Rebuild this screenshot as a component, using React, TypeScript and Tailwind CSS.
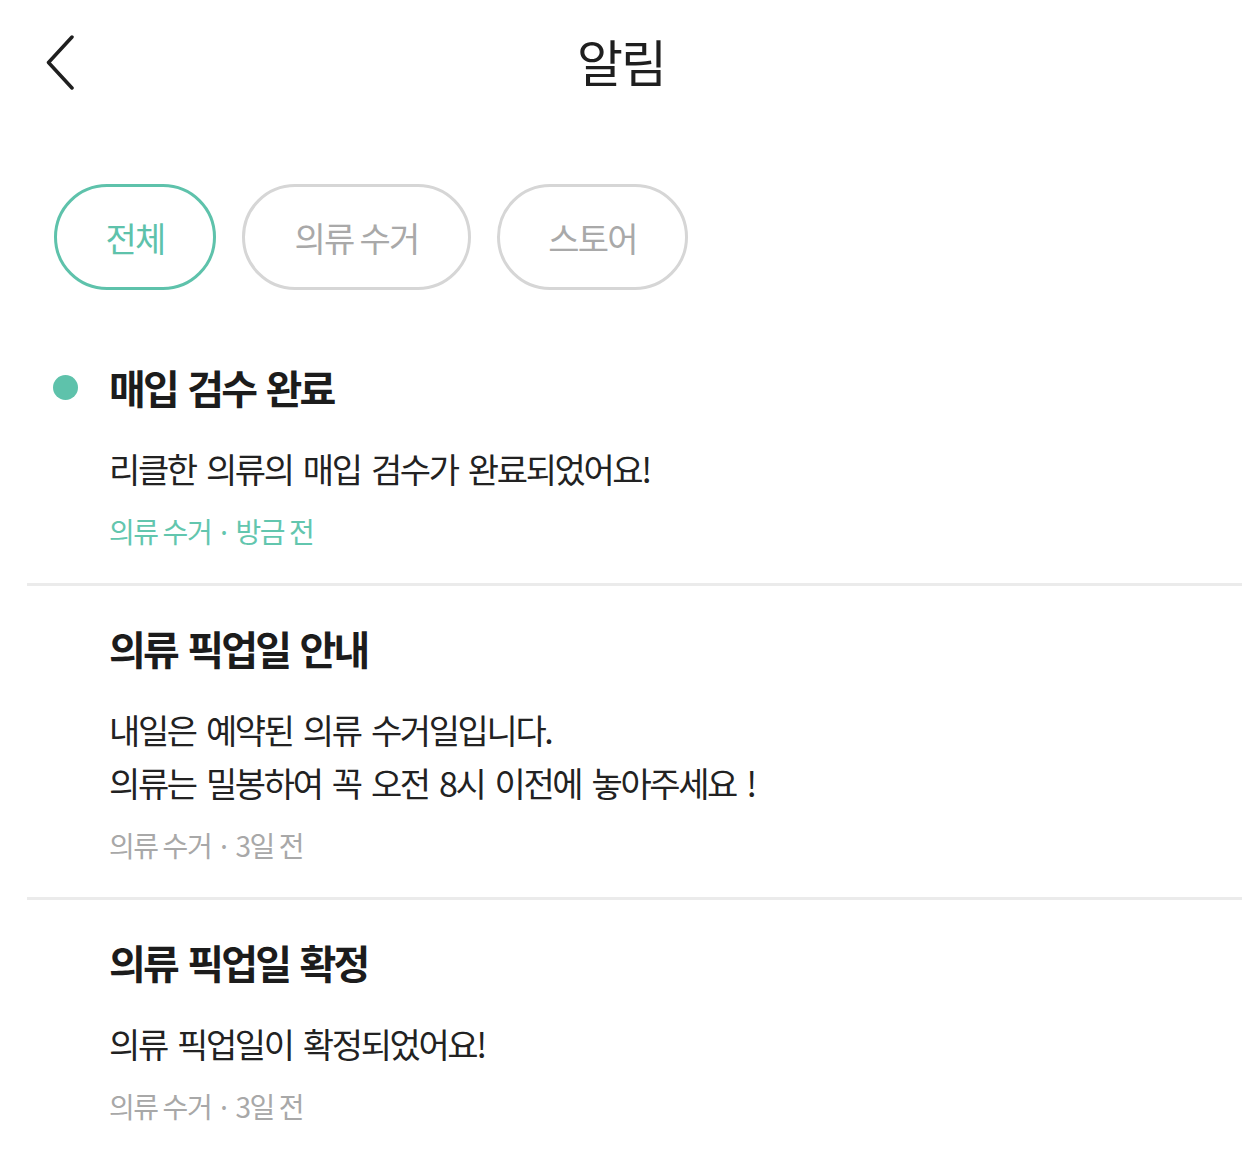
import { useState } from "react"

interface Notice {
  id: number
  title: string
  body: string[]
  category: string
  time: string
  unread: boolean
}

const tabs = [
  { key: "all", label: "전체", width: "w-[162px]" },
  { key: "pickup", label: "의류 수거", width: "w-[229px]" },
  { key: "store", label: "스토어", width: "w-[191px]" },
]

const notices: Notice[] = [
  {
    id: 1,
    title: "매입 검수 완료",
    body: ["리클한 의류의 매입 검수가 완료되었어요!"],
    category: "의류 수거",
    time: "방금 전",
    unread: true,
  },
  {
    id: 2,
    title: "의류 픽업일 안내",
    body: ["내일은 예약된 의류 수거일입니다.", "의류는 밀봉하여 꼭 오전 8시 이전에 놓아주세요 !"],
    category: "의류 수거",
    time: "3일 전",
    unread: false,
  },
  {
    id: 3,
    title: "의류 픽업일 확정",
    body: ["의류 픽업일이 확정되었어요!"],
    category: "의류 수거",
    time: "3일 전",
    unread: false,
  },
]

function BackIcon() {
  return (
    <svg width="28" height="56" viewBox="0 0 28 56" fill="none" className="mt-[6px] -ml-[1px]">
      <path
        d="M26 2 L2.5 27.5 L26 53"
        stroke="#1f1f1f"
        strokeWidth="3.5"
        strokeLinecap="round"
        strokeLinejoin="round"
      />
    </svg>
  )
}

export default function App() {
  const [active, setActive] = useState("all")

  return (
    <div className="min-h-screen w-[1242px] bg-white font-['Noto_Sans_CJK_KR','Noto_Sans_CJK_JP',sans-serif] text-[#1c1c1c]">
      {/* header */}
      <header className="grid h-[120px] grid-cols-[1fr_auto_1fr] items-center px-[47px]">
        <button className="flex items-center justify-start">
          <BackIcon />
        </button>
        <h1 className="text-[50px] leading-none font-normal tracking-[-0.04em] text-[#1f1f1f]">알림</h1>
        <div />
      </header>

      {/* filter tabs */}
      <div className="mt-[64px] flex gap-[26px] pl-[54px]">
        {tabs.map((tab) => (
          <button
            key={tab.key}
            onClick={() => setActive(tab.key)}
            className={`${tab.width} flex h-[106px] items-center justify-center rounded-full border-[3px] text-[34px] tracking-[-0.05em] ${
              active === tab.key ? "border-[#5ec2ab] text-[#5ec2ab]" : "border-[#d6d6d6] text-[#a9a9a9]"
            }`}
          >
            {tab.label}
          </button>
        ))}
      </div>

      {/* notification list */}
      <ul className="mt-[35px] ml-[27px]">
        {notices.map((n, i) => (
          <li
            key={n.id}
            className={`flex pt-[37px] pb-[32px] pl-[26px] ${i < notices.length - 1 ? "border-b-[3px] border-[#ebebeb]" : ""}`}
          >
            <div className="w-[25px] shrink-0">
              {n.unread && <span className="mt-[13px] block h-[25px] w-[25px] rounded-full bg-[#5ec2ab]" />}
            </div>
            <div className="ml-[31px] flex-1">
              <h2 className="text-[40px] leading-[50px] font-bold tracking-[-0.07em] [word-spacing:4px] text-[#1c1c1c]">
                {n.title}
              </h2>
              <div className="mt-[30px] text-[34px] leading-[53px] tracking-[-0.07em] [word-spacing:5px] text-[#222222]">
                {n.body.map((line) => (
                  <p key={line}>{line}</p>
                ))}
              </div>
              <p
                className={`mt-[16px] text-[28px] leading-[40px] tracking-[-0.05em] ${
                  n.unread ? "text-[#62c6ae]" : "text-[#a8a8a8]"
                }`}
              >
                {n.category} · {n.time}
              </p>
            </div>
          </li>
        ))}
      </ul>
    </div>
  )
}
